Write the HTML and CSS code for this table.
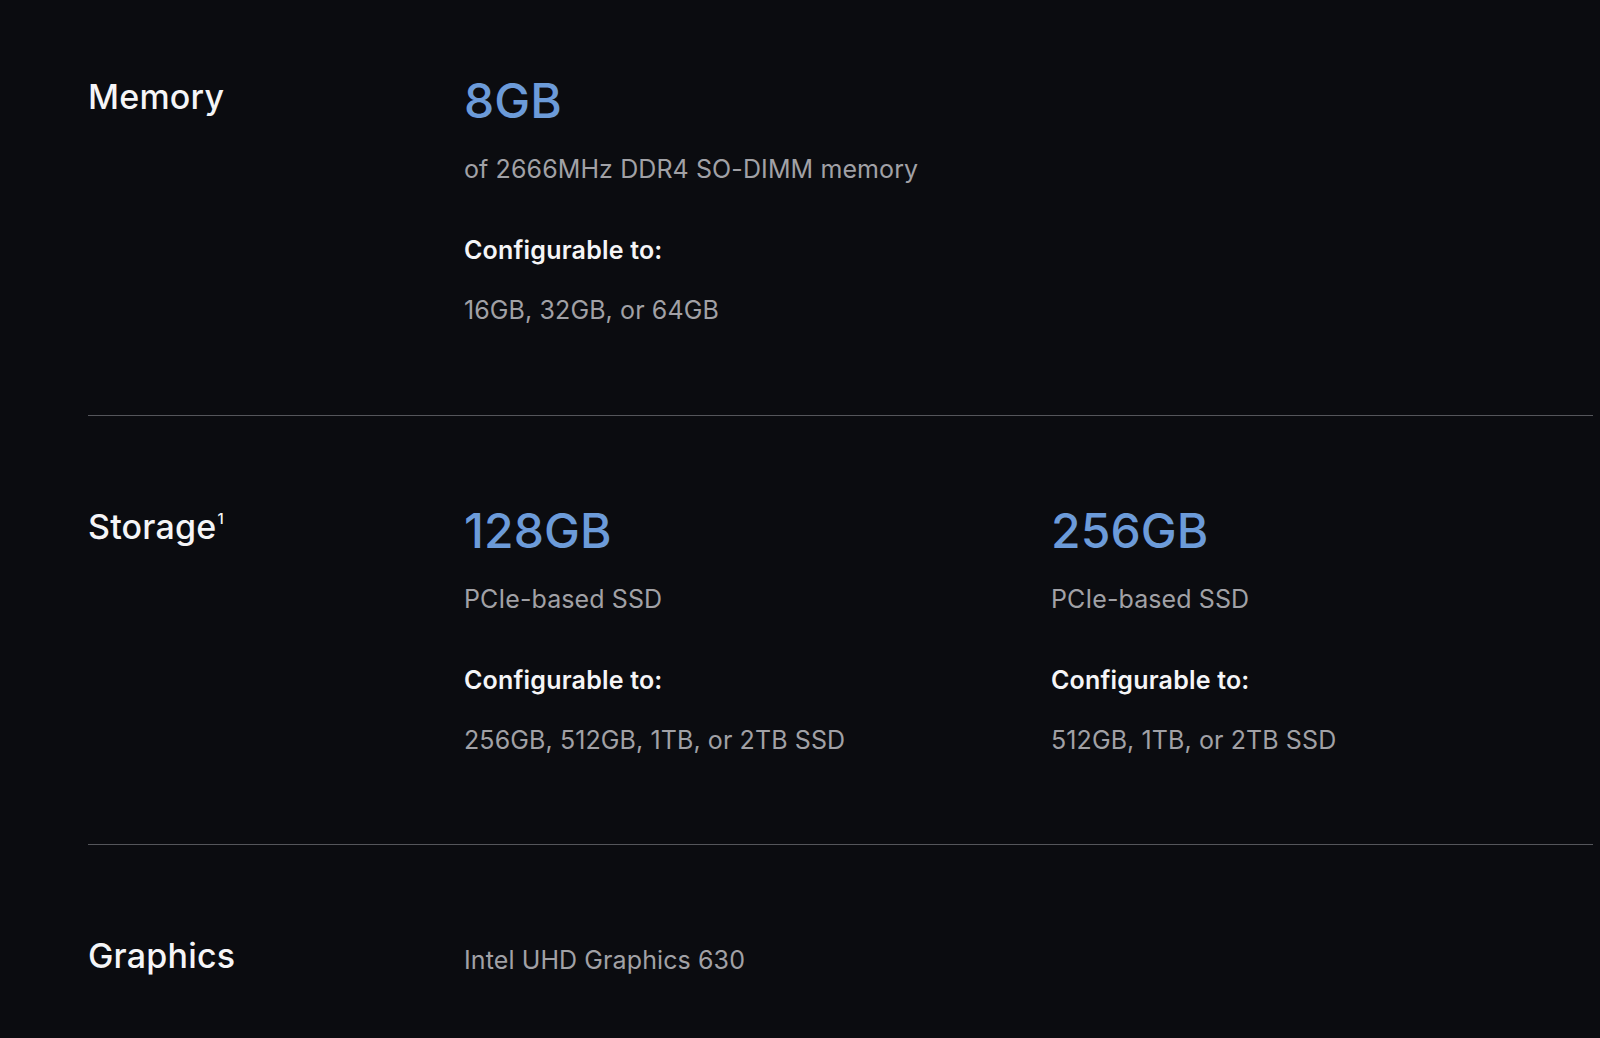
FILE: index.html
```html
<!DOCTYPE html>
<html lang="en">
<head>
    <meta charset="UTF-8">
    <meta name="viewport" content="width=device-width, initial-scale=1.0">
    <title>Tech Specs</title>
    <link rel="stylesheet" href="styles.css">
</head>
<body>
    <div class="specs">
        <section class="spec-row">
            <h2 class="spec-label">Memory</h2>
            <div class="spec-option">
                <div class="spec-big">8GB</div>
                <p class="spec-text">of 2666MHz DDR4 SO-DIMM memory</p>
                <p class="spec-config">Configurable to:</p>
                <p class="spec-text spec-text-tight">16GB, 32GB, or 64GB</p>
            </div>
        </section>

        <section class="spec-row">
            <h2 class="spec-label">Storage<sup>1</sup></h2>
            <div class="spec-option">
                <div class="spec-big">128GB</div>
                <p class="spec-text">PCIe-based SSD</p>
                <p class="spec-config">Configurable to:</p>
                <p class="spec-text spec-text-tight">256GB, 512GB, 1TB, or 2TB SSD</p>
            </div>
            <div class="spec-option">
                <div class="spec-big">256GB</div>
                <p class="spec-text">PCIe-based SSD</p>
                <p class="spec-config">Configurable to:</p>
                <p class="spec-text spec-text-tight">512GB, 1TB, or 2TB SSD</p>
            </div>
        </section>

        <section class="spec-row">
            <h2 class="spec-label">Graphics</h2>
            <div class="spec-option spec-option-plain">
                <p class="spec-text">Intel UHD Graphics 630</p>
            </div>
        </section>
    </div>
</body>
</html>
```

FILE: styles.css
```css
body {
    margin: 0;
    background: #0b0c10;
    font-family: Inter, "Noto Sans", Arial, sans-serif;
    color: #f5f5f7;
}

.specs {
    padding: 0 7px 0 88px;
}

.spec-row {
    display: grid;
    grid-template-columns: 376px 587px 1fr;
    padding: 87px 0 87px;
    border-top: 1px solid #55565b;
}

.spec-row:first-child {
    padding-top: 73px;
    padding-bottom: 88px;
    border-top: none;
}

.spec-row:last-child {
    padding-bottom: 60px;
}

.spec-label {
    margin: 0;
    font-size: 34px;
    line-height: 48px;
    font-weight: 500;
    letter-spacing: 0.2px;
}

.spec-label sup {
    font-size: 15px;
    vertical-align: 15px;
    line-height: 0;
    margin-left: 1px;
}

.spec-big {
    font-size: 48px;
    line-height: 56px;
    font-weight: 500;
    letter-spacing: 0.1px;
    color: #6c9bd9;
}

.spec-text {
    margin: 24px 0 0;
    font-size: 25px;
    line-height: 33px;
    letter-spacing: 0.1px;
    color: #a1a1a6;
}

.spec-text-tight {
    margin-top: 27px;
}

.spec-config {
    margin: 48px 0 0;
    font-size: 25px;
    line-height: 33px;
    font-weight: 600;
    letter-spacing: 0.2px;
    color: #f5f5f7;
}

.spec-option-plain {
    padding-top: 12px;
}

.spec-option-plain .spec-text {
    margin-top: 0;
}
```
